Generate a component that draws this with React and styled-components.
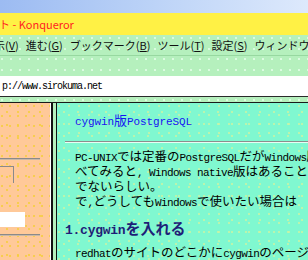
import React from "react";
import styled, { createGlobalStyle } from "styled-components";

const GlobalStyle = createGlobalStyle`
  html, body {
    margin: 0;
    padding: 0;
  }
  body {
    width: 308px;
    height: 260px;
    overflow: hidden;
    font-family: "Noto Sans CJK JP", sans-serif;
  }
`;

// faint speckles of the old theme backgrounds
const speckle = (c) => `
  radial-gradient(circle at 2px 3px, ${c} 0.6px, transparent 1.1px),
  radial-gradient(circle at 7px 9px, ${c} 0.6px, transparent 1.1px)
`;

const Window = styled.div`
  width: 308px;
  height: 260px;
  display: flex;
  flex-direction: column;
  overflow: hidden;
`;

const Sky = styled.div`
  height: 13px;
  flex: none;
  background: linear-gradient(90deg, #9cbbf2 0%, #bcd3f7 50%, #dde9fc 100%);
`;

const TitleBar = styled.div`
  height: 22px;
  flex: none;
  display: flex;
  align-items: center;
  background: #fff145;
  color: #ff2222;
  font-size: 11px;
  white-space: nowrap;
`;

const TitleText = styled.span`
  margin-left: -1px;
`;

const Bar = styled.div`
  height: ${(p) => p.$h}px;
  flex: none;
  background-color: #b5f0bd;
  background-image: ${speckle("rgba(235,255,240,0.9)")};
  background-size: 9px 11px, 13px 7px;
  border-bottom: ${(p) => (p.$line ? `1px solid ${p.$line}` : "none")};
`;

const MenuBar = styled(Bar)`
  display: flex;
  align-items: center;
  gap: 7px;
  font-size: 11px;
  color: #111;
  white-space: nowrap;
`;

const MenuItem = styled.span`
  &:first-child {
    margin-left: -17px;
  }
`;

const Key = styled.span`
  text-decoration: underline;
`;

const Location = styled.div`
  height: 20px;
  flex: none;
  display: flex;
  align-items: center;
  padding-left: 2px;
  background: #fff;
  border-bottom: 1px solid #2a2a2a;
  font-family: "Liberation Mono", monospace;
  font-size: 10px;
  letter-spacing: -1px;
  color: #000;
  white-space: nowrap;
`;

const Frames = styled.div`
  flex: 1;
  min-height: 0;
  display: flex;
  gap: 3px;
  background: #b5f0bd;
`;

const Side = styled.div`
  width: 53px;
  flex: none;
  box-sizing: border-box;
  display: flex;
  flex-direction: column;
  align-items: flex-start;
  background-color: #ffc999;
  background-image: ${speckle("#f4cf3a")};
  background-size: 8px 10px, 11px 13px;
  border-right: 2px solid #111;
  box-shadow: inset -1px 0 0 #fff;
`;

const SideRule = styled.div`
  margin-top: ${(p) => p.$top}px;
  width: 40px;
  border-top: 1px solid #8a8a8a;
  border-bottom: 1px solid #c9b8a6;
`;

const SideBox = styled.div`
  margin-top: 6px;
  width: 13px;
  height: 16px;
  border-top: 1px solid #8a8a8a;
  border-right: 1px solid #8a8a8a;
`;

const SideField = styled.div`
  margin-top: 29px;
  width: 25px;
  height: 15px;
  background: #fff;
`;

const Main = styled.div`
  flex: 1;
  min-width: 0;
  border-left: 1px solid #111;
  background-color: #80f8d0;
  background-image: ${speckle("#c9f4a4")};
  background-size: 10px 9px, 14px 12px;
  overflow: hidden;
  white-space: nowrap;
  color: #000;
`;

const Mono = styled.span`
  font-family: "Liberation Mono", monospace;
  font-size: ${(p) => p.$size || 11}px;
  letter-spacing: ${(p) => (p.$ls === undefined ? -0.6 : p.$ls)}px;
`;

const PageTitle = styled.div`
  margin: 9px 0 0 18px;
  height: 16px;
  line-height: 16px;
  font-size: 13px;
  color: #1616f2;
`;

const Rule = styled.div`
  margin: 13px 0 0 8px;
  border-top: 1px solid #8d8d8d;
  border-bottom: 1px solid #e6fff4;
`;

const Para = styled.div`
  margin: ${(p) => p.$top}px 0 0 18px;
  font-size: 12.5px;
`;

const Line = styled.div`
  height: 15px;
  line-height: 15px;
`;

const Section = styled.div`
  margin: 10px 0 0 8px;
  height: 20px;
  line-height: 20px;
  font-size: 15px;
  font-weight: 700;
  color: #1e1e78;
`;

const menu = [
  ["表示", "V"],
  ["進む", "G"],
  ["ブックマーク", "B"],
  ["ツール", "T"],
  ["設定", "S"],
  ["ウィンドウ", "W"],
];

export default function App() {
  return (
    <Window>
      <GlobalStyle />
      <Sky />
      <TitleBar>
        <TitleText>ト - Konqueror</TitleText>
      </TitleBar>
      <MenuBar $h={20} $line="#97d8a0">
        {menu.map(([label, key]) => (
          <MenuItem key={key}>
            {label}(<Key>{key}</Key>)
          </MenuItem>
        ))}
      </MenuBar>
      <Bar $h={20} />
      <Location>p://www.sirokuma.net</Location>
      <Bar $h={5} $line="#1a1a1a" />
      <Frames>
        <Side>
          <SideRule $top={55} />
          <SideBox />
          <SideField />
          <SideRule $top={7} />
        </Side>
        <Main>
          <PageTitle>
            <Mono $ls={-0.1}>cygwin</Mono>版<Mono $ls={-0.1}>PostgreSQL</Mono>
          </PageTitle>
          <Rule />
          <Para $top={5}>
            <Line>
              <Mono>PC-UNIX</Mono>では定番の<Mono>PostgreSQL</Mono>だが<Mono>Windows</Mono>版を調
            </Line>
            <Line>
              べてみると<Mono>, Windows native</Mono>版はあることはある
            </Line>
            <Line>でないらしい。</Line>
            <Line>
              で<Mono>,</Mono>どうしても<Mono>Windows</Mono>で使いたい場合は
            </Line>
          </Para>
          <Section>
            <Mono $size={13} $ls={-0.25}>1.cygwin</Mono>を入れる
          </Section>
          <Para $top={6}>
            <Line>
              <Mono>redhat</Mono>のサイトのどこかに<Mono>cygwin</Mono>のページがある
            </Line>
          </Para>
        </Main>
      </Frames>
    </Window>
  );
}
